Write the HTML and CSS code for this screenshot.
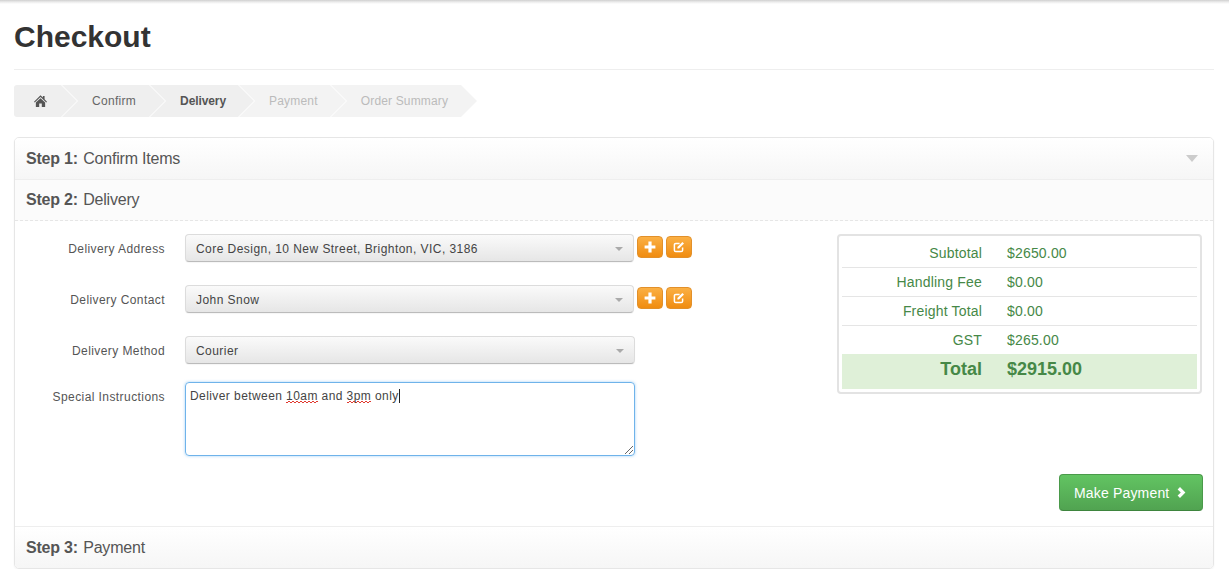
FILE: index.html
```html
<!DOCTYPE html>
<html lang="en">
<head>
<meta charset="utf-8">
<title>Checkout</title>
<link rel="stylesheet" href="styles.css">
</head>
<body>
<div class="topshade"></div>
<main class="page">
  <h1 class="title">Checkout</h1>
  <ol class="crumbs">
    <li class="crumb crumb-home"><svg class="home-icon" viewBox="0 0 14 12" preserveAspectRatio="none" aria-label="Home"><path d="M7 0.2 L9.6 2.6 V1 H11.4 V4.3 L14 6.8 L13.2 7.6 L7 2 L0.8 7.6 L0 6.8 Z M2 7.6 L7 3.2 L12 7.6 V12 H8.4 V8.6 H5.6 V12 H2 Z"/></svg></li>
    <li class="crumb crumb-done">Confirm</li>
    <li class="crumb crumb-current">Delivery</li>
    <li class="crumb crumb-off">Payment</li>
    <li class="crumb crumb-off crumb-last">Order Summary</li>
  </ol>
  <section class="panel">
    <header class="step step-closed">
      <span><b>Step 1:</b> Confirm Items</span><i class="step-caret"></i>
    </header>
    <header class="step step-open"><span><b>Step 2:</b> Delivery</span></header>
    <div class="step-body">
      <div class="columns">
        <form class="form">
          <div class="row">
            <label class="row-label">Delivery Address</label>
            <div class="select"><span>Core Design, 10 New Street, Brighton, VIC, 3186</span><i class="select-arrow"></i></div>
            <button type="button" class="mini"><svg viewBox="0 0 12 12"><path d="M4.4 0.6 H7.6 V4.4 H11.4 V7.6 H7.6 V11.4 H4.4 V7.6 H0.6 V4.4 H4.4 Z"/></svg></button>
            <button type="button" class="mini"><svg viewBox="0 0 12 12"><path class="pen-box" d="M6.6 2.4 H2.8 Q1.4 2.4 1.4 3.8 V9.2 Q1.4 10.6 2.8 10.6 H8.2 Q9.6 10.6 9.6 9.2 V6.6"/><path d="M4.4 6 L9.4 1 L11 2.6 L6 7.6 H4.4 Z"/></svg></button>
          </div>
          <div class="row">
            <label class="row-label">Delivery Contact</label>
            <div class="select"><span>John Snow</span><i class="select-arrow"></i></div>
            <button type="button" class="mini"><svg viewBox="0 0 12 12"><path d="M4.4 0.6 H7.6 V4.4 H11.4 V7.6 H7.6 V11.4 H4.4 V7.6 H0.6 V4.4 H4.4 Z"/></svg></button>
            <button type="button" class="mini"><svg viewBox="0 0 12 12"><path class="pen-box" d="M6.6 2.4 H2.8 Q1.4 2.4 1.4 3.8 V9.2 Q1.4 10.6 2.8 10.6 H8.2 Q9.6 10.6 9.6 9.2 V6.6"/><path d="M4.4 6 L9.4 1 L11 2.6 L6 7.6 H4.4 Z"/></svg></button>
          </div>
          <div class="row">
            <label class="row-label">Delivery Method</label>
            <div class="select select-wide"><span>Courier</span><i class="select-arrow"></i></div>
          </div>
          <div class="row row-area">
            <label class="row-label">Special Instructions</label>
            <div class="textarea" role="textbox">Deliver between <span class="typo">10am</span> and <span class="typo">3pm</span> only<i class="caret"></i>
              <svg class="grip" viewBox="0 0 8 8"><path d="M0 8 L8 0 M4 8 L8 4"/></svg>
            </div>
          </div>
        </form>
        <div class="summary">
          <table class="totals">
            <tr><th>Subtotal</th><td>$2650.00</td></tr>
            <tr><th>Handling Fee</th><td>$0.00</td></tr>
            <tr><th>Freight Total</th><td>$0.00</td></tr>
            <tr><th>GST</th><td>$265.00</td></tr>
            <tr class="grand"><th>Total</th><td>$2915.00</td></tr>
          </table>
        </div>
      </div>
      <div class="actions">
        <button type="button" class="pay">Make Payment<svg viewBox="0 0 9 11"><path d="M3 0 L8.4 5.5 L3 11 L0.6 8.6 L3.8 5.5 L0.6 2.4 Z"/></svg></button>
      </div>
    </div>
    <header class="step step-last"><span><b>Step 3:</b> Payment</span></header>
  </section>
</main>
</body>
</html>
```
FILE: styles.css
```css
* { box-sizing: border-box; }
html, body { margin: 0; padding: 0; background: #fff; }
body { font-family: "Liberation Sans", Arial, sans-serif; font-size: 12px; color: #555; }
.topshade { height: 4px; background: linear-gradient(#cfcfcf, #ececec 50%, #fff); }
.page { padding: 0 15px 0 14px; }
.title { margin: 0; height: 66px; border-bottom: 1px solid #eee; padding-top: 16px; font-size: 30px; line-height: 34px; font-weight: 700; color: #333; }
.crumbs { display: flex; list-style: none; margin: 15px 0 20px; padding: 0; height: 32px; letter-spacing: .3px; }
.crumb { position: relative; height: 32px; line-height: 32px; padding: 0 12px 0 30px; margin-right: 1px; background: #efefef; }
.crumb::before, .crumb::after { content: ""; position: absolute; top: 0; border-style: solid; border-width: 16px 0 16px 16px; border-color: transparent; }
.crumb::before { left: calc(100% + 1px); border-left-color: #fff; z-index: 1; }
.crumb::after { left: 100%; border-left-color: #efefef; z-index: 2; }
.crumb-home { padding: 0 14px 0 20px; border-radius: 3px 0 0 3px; display: flex; align-items: center; width: 47px; }
.home-icon { width: 13px; height: 12px; fill: #555; display: block; }
.crumb-done { color: #666; padding-right: 13px; }
.crumb-current { color: #555; font-weight: 700; letter-spacing: -.1px; }
.crumb-off { color: #bbb; background: #f3f3f3; letter-spacing: .2px; }
.crumb-off::after { border-left-color: #f3f3f3; }
.crumb-last { letter-spacing: .15px; padding-right: 13px; }
.panel { border: 1px solid #e6e6e6; border-radius: 5px; box-shadow: 0 1px 2px rgba(0,0,0,.05); overflow: hidden; }
.step { display: flex; justify-content: space-between; align-items: center; padding: 0 15px 0 11px; font-size: 16px; color: #555; font-weight: 400; letter-spacing: -.2px; }
.step b { font-weight: 700; margin-right: 1px; }
.step-closed { height: 42px; background: linear-gradient(#fff, #f6f6f6); border-bottom: 1px solid #eee; }
.step-open { height: 41px; background: #fbfbfb; border-bottom: 1px dashed #e6e6e6; }
.step-last { height: 42px; background: linear-gradient(#fff, #f6f6f6); border-top: 1px solid #eee; }
.step-caret { width: 0; height: 0; border-style: solid; border-width: 7px 6px 0; border-color: #ccc transparent transparent; }
.step-body { height: 305px; position: relative; padding-top: 13px; display: flex; flex-direction: column; justify-content: space-between; }
.columns { display: flex; justify-content: space-between; padding: 0 11px 0 0; }
.form { width: 680px; }
.row { display: flex; align-items: flex-start; height: 28px; margin-bottom: 23px; }
.row-area { height: 74px; margin-bottom: 0; margin-top: -5px; }
.row-label { width: 150px; margin-right: 20px; text-align: right; line-height: 30px; color: #555; letter-spacing: .42px; flex: none; }
.select { position: relative; width: 449px; height: 28px; line-height: 28px; padding-left: 10px; border: 1px solid #dcdcdc; border-bottom-color: #bbb; border-radius: 4px; background: linear-gradient(#fafafa, #e6e6e6); color: #444; flex: none; letter-spacing: .45px; box-shadow: 0 1px 1px rgba(0,0,0,.04); }
.select-wide { width: 450px; }
.select-arrow { position: absolute; right: 10px; top: 12px; width: 0; height: 0; border-style: solid; border-width: 4px 4.5px 0; border-color: #aaa transparent transparent; }
.mini { display: flex; align-items: center; justify-content: center; width: 26px; height: 22px; margin: 2px 0 0 3px; padding: 0; border: 1px solid #e2902a; border-radius: 4px; background: linear-gradient(#fbb044, #f08c10); flex: none; }
.mini svg { width: 12px; height: 12px; fill: #fff; display: block; }
.mini .pen-box { fill: none; stroke: #fff; stroke-width: 1.5; }
.textarea { position: relative; width: 450px; height: 74px; padding: 5px 4px; line-height: 16px; border: 1px solid #6fb3ea; border-radius: 4px; box-shadow: 0 0 3px rgba(82,168,236,.55); color: #444; letter-spacing: .42px; flex: none; }
.typo { background-image: repeating-linear-gradient(90deg, #e0392f 0 2px, transparent 2px 4px), repeating-linear-gradient(90deg, #e0392f 0 2px, transparent 2px 4px); background-size: 100% 1px, 100% 1px; background-position: 0 100%, 2px calc(100% - 1px); background-repeat: no-repeat; }
.caret { display: inline-block; width: 1px; height: 14px; background: #222; vertical-align: -3px; }
.grip { position: absolute; right: 1px; bottom: 1px; width: 8px; height: 8px; fill: none; stroke: #666; stroke-width: 1; }
.summary { width: 365px; height: 160px; padding: 2px 3px; border: 2px solid #e3e3e3; border-radius: 4px; flex: none; }
.totals { width: 355px; border-collapse: collapse; font-size: 14px; color: #468847; letter-spacing: .18px; }
.totals th { width: 140px; height: 29px; padding: 0; text-align: right; font-weight: 400; }
.totals td { padding: 0 0 0 25px; height: 29px; }
.totals tr:first-child th, .totals tr:first-child td { padding-top: 2px; }
.totals tr + tr th, .totals tr + tr td { border-top: 1px solid #e5e5e5; }
.totals .grand th, .totals .grand td { height: 35px; background: #dff0d8; border-top: 0; font-size: 18px; font-weight: 700; letter-spacing: 0; padding-bottom: 5px; }
.actions { display: flex; justify-content: flex-end; padding: 0 10px 15px 0; }
.pay { display: flex; align-items: center; gap: 8px; height: 37px; width: 144px; padding: 0 0 0 14px; border: 1px solid #4a9a4a; border-bottom-color: #3e853e; border-radius: 4px; background: linear-gradient(#62c462, #51a351); color: #fff; font: 14px "Liberation Sans", Arial, sans-serif; letter-spacing: .17px; }
.pay svg { width: 9px; height: 11px; fill: #fff; }
```
